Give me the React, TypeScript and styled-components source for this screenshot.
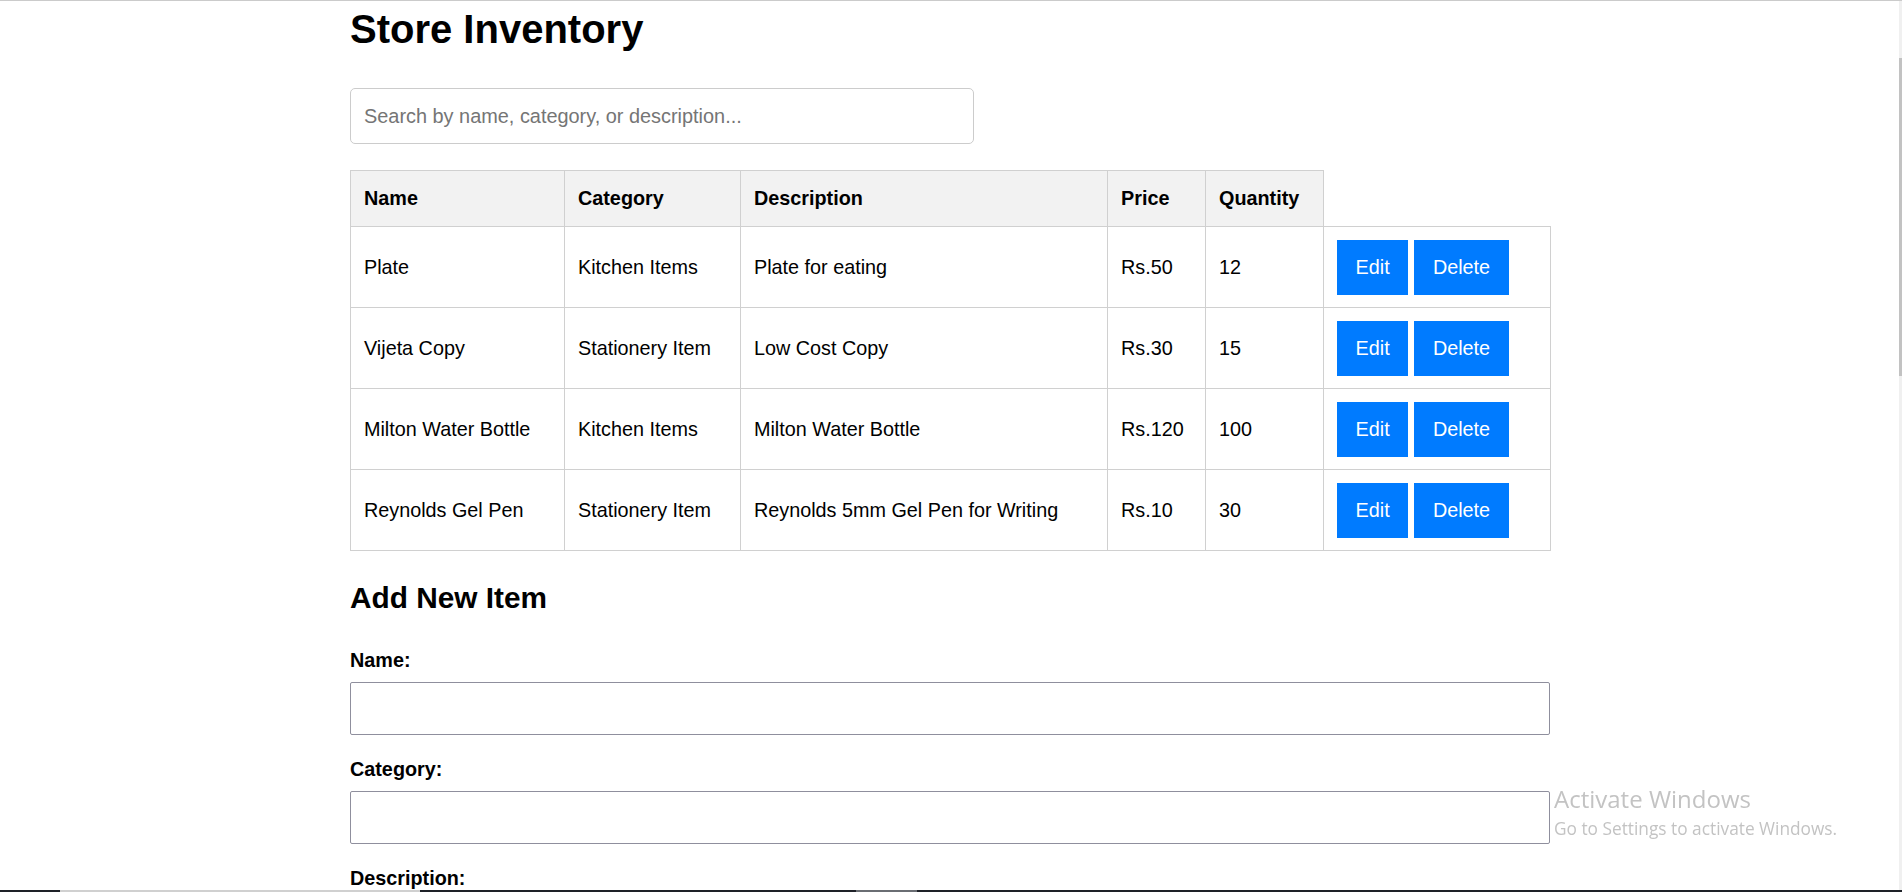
import React from 'react'
import styled, { createGlobalStyle } from 'styled-components'

interface IItem {
    name: string,
    category: string,
    description: string,
    price: number,
    quantity: number
}

const items: IItem[] = [
    { name: 'Plate', category: 'Kitchen Items', description: 'Plate for eating', price: 50, quantity: 12 },
    { name: 'Vijeta Copy', category: 'Stationery Item', description: 'Low Cost Copy', price: 30, quantity: 15 },
    { name: 'Milton Water Bottle', category: 'Kitchen Items', description: 'Milton Water Bottle', price: 120, quantity: 100 },
    { name: 'Reynolds Gel Pen', category: 'Stationery Item', description: 'Reynolds 5mm Gel Pen for Writing', price: 10, quantity: 30 },
]

const columns = [214, 176, 367, 98, 118, 227]

const GlobalStyle = createGlobalStyle`
    html, body {
        margin: 0;
        padding: 0;
        overflow: hidden;
        background: #fff;
    }
    body {
        font-family: "Liberation Sans", Arial, sans-serif;
        font-size: 19.8px;
        color: #000;
    }
`

const Page = styled.div`
    height: 892px;
    box-sizing: border-box;
    border-top: 1px solid #cbcbcb;
    padding: 6px 0 0 350px;
    overflow: hidden;
`

const Container = styled.div`
    width: 1200px;
`

const Title = styled.h1`
    font-size: 40px;
    line-height: 44px;
    font-weight: 700;
    margin: 0 0 37px;
`

const Search = styled.input`
    display: block;
    box-sizing: border-box;
    width: 624px;
    height: 56px;
    padding: 0 13px;
    border: 1px solid #ccc;
    border-radius: 5px;
    font-family: inherit;
    font-size: 19.9px;
    margin: 0 0 26px;
    outline: none;

    &::placeholder {
        color: #757575;
    }
`

const Table = styled.table`
    width: 1200px;
    table-layout: fixed;
    border-collapse: collapse;
`

const Col = styled.col<{ $w: number }>`
    width: ${p => p.$w}px;
`

const HeadRow = styled.tr`
    height: 56px;
`

const BodyRow = styled.tr`
    height: 81px;
`

const Th = styled.th`
    background: #f2f2f2;
    border: 1px solid #d0d0d0;
    padding: 0 13px;
    text-align: left;
    font-weight: 700;
    vertical-align: middle;
    white-space: nowrap;
`

const Td = styled.td`
    border: 1px solid #d0d0d0;
    padding: 0 13px;
    vertical-align: middle;
    white-space: nowrap;
`

const Actions = styled.div`
    display: flex;
    gap: 6px;
`

const Button = styled.button`
    height: 55px;
    padding: 0 18.6px;
    border: none;
    border-radius: 0;
    background: #007bff;
    color: #fff;
    font-family: inherit;
    font-size: 19.8px;
    cursor: pointer;
`

const SubTitle = styled.h2`
    font-size: 29.8px;
    line-height: 33px;
    font-weight: 700;
    margin: 30px 0 35px;
`

const Field = styled.div`
    margin-bottom: 23px;
`

const Label = styled.label`
    display: block;
    font-weight: 700;
    line-height: 22px;
    margin-bottom: 11px;
`

const FieldInput = styled.input`
    display: block;
    box-sizing: border-box;
    width: 1200px;
    height: 53px;
    padding: 0 12px;
    border: 1px solid #8f8f9d;
    border-radius: 2px;
    font-family: inherit;
    font-size: 19.8px;
`

const Watermark = styled.div`
    position: fixed;
    left: 1554px;
    top: 785px;
    font-family: "Open Sans", "Noto Sans", sans-serif;
    color: #c3c3c3;
    pointer-events: none;
`

const WatermarkTitle = styled.div`
    font-size: 24px;
    line-height: 28px;
`

const WatermarkText = styled.div`
    font-size: 17.3px;
    line-height: 32px;
`

const ScrollTrack = styled.div`
    position: fixed;
    top: 1px;
    right: 0;
    width: 3px;
    height: 891px;
    background: #f0f0f0;
`

const ScrollThumb = styled.div`
    margin-top: 57px;
    height: 318px;
    background: #c2c2c2;
`

const Taskbar = styled.div`
    position: fixed;
    left: 0;
    bottom: 0;
    width: 100%;
    height: 2px;
    display: flex;
`

const TaskSegment = styled.div<{ $w?: number, $color: string }>`
    flex: ${p => p.$w ? `0 0 ${p.$w}px` : '1'};
    background: ${p => p.$color};
`

const fields = ['Name', 'Category', 'Description']

const App: React.FC = () => {
    let rows: JSX.Element[] = []

    items.forEach((item, i) => {
        rows.push(
            <BodyRow key={i}>
                <Td>{item.name}</Td>
                <Td>{item.category}</Td>
                <Td>{item.description}</Td>
                <Td>{`Rs.${item.price}`}</Td>
                <Td>{item.quantity}</Td>
                <Td>
                    <Actions>
                        <Button>Edit</Button>
                        <Button>Delete</Button>
                    </Actions>
                </Td>
            </BodyRow>
        )
    })

    return (
        <>
            <GlobalStyle />
            <Page>
                <Container>
                    <Title>Store Inventory</Title>
                    <Search placeholder="Search by name, category, or description..." />
                    <Table>
                        <colgroup>
                            {columns.map((w, i) => <Col key={i} $w={w} />)}
                        </colgroup>
                        <thead>
                            <HeadRow>
                                <Th>Name</Th>
                                <Th>Category</Th>
                                <Th>Description</Th>
                                <Th>Price</Th>
                                <Th>Quantity</Th>
                            </HeadRow>
                        </thead>
                        <tbody>
                            {rows}
                        </tbody>
                    </Table>
                    <SubTitle>Add New Item</SubTitle>
                    {fields.map(f => (
                        <Field key={f}>
                            <Label>{f}:</Label>
                            <FieldInput />
                        </Field>
                    ))}
                </Container>
            </Page>
            <Watermark>
                <WatermarkTitle>Activate Windows</WatermarkTitle>
                <WatermarkText>Go to Settings to activate Windows.</WatermarkText>
            </Watermark>
            <ScrollTrack>
                <ScrollThumb />
            </ScrollTrack>
            <Taskbar>
                <TaskSegment $w={60} $color="#1e2128" />
                <TaskSegment $w={360} $color="#d0d0d0" />
                <TaskSegment $w={436} $color="#1e2128" />
                <TaskSegment $w={61} $color="#6a6d73" />
                <TaskSegment $color="#1e2128" />
            </Taskbar>
        </>
    )
}

export default App
